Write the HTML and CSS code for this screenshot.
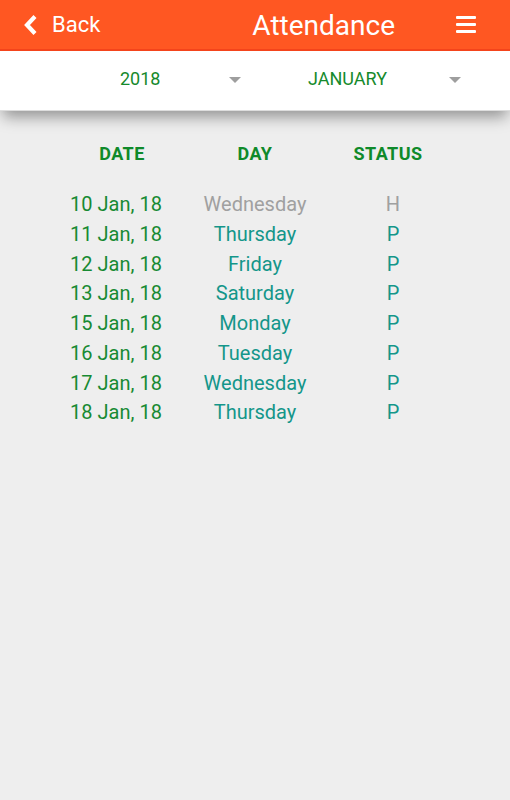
FILE: index.html
```html
<!DOCTYPE html>
<html>
<head>
<meta charset="utf-8">
<title>Attendance</title>
<link rel="stylesheet" href="styles.css">
</head>
<body>
<header class="appbar">
  <div class="back">
    <svg class="chev" width="16" height="22" viewBox="0 0 16 22"><path d="M12 2.5 L4 11 L12 19.5" fill="none" stroke="#fff" stroke-width="4.2" stroke-linejoin="miter"/></svg>
    <span class="back-text">Back</span>
  </div>
  <h1 class="title">Attendance</h1>
  <div class="menu">
    <span class="bar"></span><span class="bar"></span><span class="bar"></span>
  </div>
</header>
<div class="filters">
  <div class="spinner spinner-year">
    <span class="spin-text">2018</span>
    <span class="caret"></span>
  </div>
  <div class="spinner spinner-month">
    <span class="spin-text">JANUARY</span>
    <span class="caret"></span>
  </div>
</div>
<main class="table">
  <div class="row head">
    <div class="c date">DATE</div>
    <div class="c day">DAY</div>
    <div class="c status">STATUS</div>
  </div>
  <div class="rows">
    <div class="row holiday"><div class="c date">10 Jan, 18</div><div class="c day">Wednesday</div><div class="c status">H</div></div>
    <div class="row"><div class="c date">11 Jan, 18</div><div class="c day">Thursday</div><div class="c status">P</div></div>
    <div class="row"><div class="c date">12 Jan, 18</div><div class="c day">Friday</div><div class="c status">P</div></div>
    <div class="row"><div class="c date">13 Jan, 18</div><div class="c day">Saturday</div><div class="c status">P</div></div>
    <div class="row"><div class="c date">15 Jan, 18</div><div class="c day">Monday</div><div class="c status">P</div></div>
    <div class="row"><div class="c date">16 Jan, 18</div><div class="c day">Tuesday</div><div class="c status">P</div></div>
    <div class="row"><div class="c date">17 Jan, 18</div><div class="c day">Wednesday</div><div class="c status">P</div></div>
    <div class="row"><div class="c date">18 Jan, 18</div><div class="c day">Thursday</div><div class="c status">P</div></div>
  </div>
</main>
</body>
</html>
```
FILE: styles.css
```css
html, body {
  margin: 0;
  padding: 0;
}
body {
  background: #eeeeee;
  font-family: Roboto, "Liberation Sans", sans-serif;
  width: 510px;
  min-height: 800px;
}
.appbar {
  height: 49px;
  background: #ff5722;
  border-bottom: 2px solid #f4441b;
  display: flex;
  align-items: center;
  color: #fff;
  position: relative;
  z-index: 2;
}
.back {
  display: flex;
  align-items: center;
  padding-left: 23px;
}
.chev {
  display: block;
}
.back-text {
  font-size: 22px;
  margin-left: 13px;
  line-height: 1;
  padding-top: 1px;
}
.title {
  margin: 0 0 0 auto;
  font-size: 28px;
  font-weight: 400;
  line-height: 1;
  padding-top: 3px;
}
.menu {
  margin-left: 61px;
  margin-right: 34px;
  display: flex;
  flex-direction: column;
  gap: 4px;
  margin-bottom: 1px;
}
.bar {
  display: block;
  width: 20px;
  height: 3px;
  background: #fff;
  border-radius: 1px;
}
.filters {
  height: 59px;
  background: #fff;
  display: flex;
  align-items: center;
  border-bottom: 1px solid #dddddd;
  box-shadow: 0 9px 14px -3px rgba(0, 0, 0, 0.38);
  position: relative;
  z-index: 1;
}
.spinner {
  display: flex;
  align-items: center;
  width: 255px;
  margin-top: -3px;
}
.spin-text {
  color: #168a2c;
  font-size: 18px;
  line-height: 1;
}
.spinner-year {
  padding-left: 120px;
  padding-right: 14px;
  box-sizing: border-box;
}
.spinner-month {
  padding-left: 53px;
  padding-right: 49px;
  box-sizing: border-box;
}
.caret {
  margin-left: auto;
  width: 0;
  height: 0;
  border-left: 6px solid transparent;
  border-right: 6px solid transparent;
  border-top: 6px solid #9e9e9e;
  margin-top: 1px;
}
.table {
  padding-top: 31px;
}
.row {
  display: grid;
  grid-template-columns: 140px 138px 138px;
  padding-left: 46px;
}
.c {
  text-align: center;
}
.head {
  font-size: 18px;
  font-weight: 700;
  line-height: 24px;
  color: #0f8a2a;
  letter-spacing: 0.4px;
}
.head .date {
  padding-left: 12px;
}
.head .status {
  padding-right: 10px;
}
.rows {
  margin-top: 24px;
}
.rows .row {
  font-size: 20px;
  line-height: 29.75px;
}
.rows .date {
  color: #178a33;
}
.rows .day,
.rows .status {
  color: #14968a;
}
.rows .holiday .day,
.rows .holiday .status {
  color: #a0a0a0;
}
```
